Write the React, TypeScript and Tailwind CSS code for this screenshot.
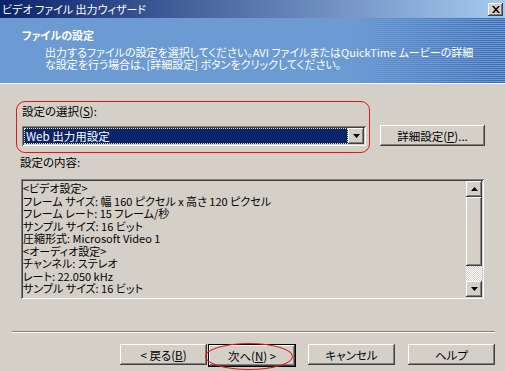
import React from "react";

const raised =
  "bg-[#d4d0c8] shadow-[inset_-1px_-1px_#404040,inset_1px_1px_#ffffff,inset_-2px_-2px_#808080,inset_2px_2px_#d4d0c8]";
const sunken =
  "shadow-[inset_1px_1px_#808080,inset_-1px_-1px_#ffffff,inset_2px_2px_#404040,inset_-2px_-2px_#d4d0c8]";

function Btn({ children, className = "" }: { children: React.ReactNode; className?: string }) {
  return (
    <div
      className={`${raised} h-[21px] flex items-center justify-center text-[11.5px] leading-[14px] text-black whitespace-nowrap ${className}`}
    >
      {children}
    </div>
  );
}

function Arrow({ up }: { up?: boolean }) {
  return (
    <svg width="7" height="4" viewBox="0 0 7 4" className={up ? "rotate-180" : ""}>
      <path d="M0 0h7L3.5 4z" fill="#000" />
    </svg>
  );
}

export default function App() {
  const lines = [
    "<ビデオ設定>",
    "フレーム サイズ: 幅 160 ピクセル x 高さ 120 ピクセル",
    "フレーム レート: 15 フレーム/秒",
    "サンプル サイズ: 16 ビット",
    "圧縮形式: Microsoft Video 1",
    "<オーディオ設定>",
    "チャンネル: ステレオ",
    "レート: 22.050 kHz",
    "サンプル サイズ: 16 ビット",
  ];
  return (
    <div className="relative w-[505px] h-[371px] overflow-hidden bg-[#d4d0c8] font-['Noto_Sans_CJK_JP','Noto_Sans',sans-serif] [font-feature-settings:'palt'] text-[11.5px] text-black">
      {/* Title bar */}
      <div className="h-[18px] flex items-center justify-between pl-[2px] pr-[2px] bg-[linear-gradient(to_right,#0a246a,#a6caf0)]">
        <span className="text-white text-[11px] leading-[13px] whitespace-nowrap">ビデオ ファイル 出力ウィザード</span>
        <div className={`${raised} w-[15px] h-[13px] flex items-center justify-center`}>
          <svg width="8" height="7" viewBox="0 0 8 7">
            <path d="M0 0h2l2 2.5L6 0h2L5 3.5 8 7H6L4 4.5 2 7H0l3-3.5z" fill="#000" />
          </svg>
        </div>
      </div>

      {/* Header */}
      <div className="h-[66px] border-b border-white pt-[10px] bg-[image:linear-gradient(to_right,#6c9ad2_70%,rgba(108,154,210,0)_100%),repeating-linear-gradient(to_bottom,#3c68b4_0px,#3c68b4_1px,#6c9ad2_1px,#6c9ad2_2px)]">
        <div className="pl-[22px] text-white font-bold text-[11px] leading-[14px] whitespace-nowrap">ファイルの設定</div>
        <div className="pl-[45px] mt-[4px] text-white text-[11px] leading-[12px] whitespace-nowrap">
          <div>出力するファイルの設定を選択してください。AVI ファイルまたはQuickTime ムービーの詳細</div>
          <div>な設定を行う場合は、[詳細設定] ボタンをクリックしてください。</div>
        </div>
      </div>

      {/* Body */}
      <div className="pl-[16px] pt-[17px]">
        <div className="flex items-start">
          <div className="w-[354px] h-[52px] border border-[#e8141c] rounded-[9px] pl-[5px] pt-[2px]">
            <div className="leading-[14px] whitespace-nowrap">
              設定の選択(<span className="underline">S</span>):
            </div>
            <div className={`${sunken} bg-white mt-[8px] w-[344px] h-[20px] p-[2px] flex`}>
              <div className="flex-1 bg-[#0a246a] border border-dotted border-[#f4e4a0] text-white leading-[14px] pl-[1px] whitespace-nowrap">
                Web 出力用設定
              </div>
              <div className={`${raised} w-[16px] flex items-center justify-center`}>
                <Arrow />
              </div>
            </div>
          </div>
          <Btn className="ml-[10px] mt-[24px] w-[105px]">
            詳細設定(<span className="underline">P</span>)...
          </Btn>
        </div>

        <div className="mt-[2px] pl-[4px] leading-[14px] whitespace-nowrap">設定の内容:</div>

        <div className={`${sunken} mt-[10px] ml-[5px] w-[463px] h-[120px] p-[2px] flex`}>
          <div className="flex-1 pt-[1px] text-[11px] leading-[12.5px] whitespace-pre">
            {lines.map((l, i) => (
              <div key={i}>{l}</div>
            ))}
          </div>
          <div className="w-[16px] flex flex-col">
            <div className={`${raised} h-[16px] flex items-center justify-center`}>
              <Arrow up />
            </div>
            <div className={`${raised} h-[69px]`} />
            <div className="h-[15px] bg-[repeating-conic-gradient(#d4d0c8_0_25%,#ffffff_0_50%)] bg-[length:2px_2px]" />
            <div className={`${raised} h-[16px] flex items-center justify-center`}>
              <Arrow />
            </div>
          </div>
        </div>
      </div>

      {/* Separator */}
      <div className="ml-[12px] mr-[10px] mt-[32px] border-t border-[#808080] border-b border-b-white h-[2px]" />

      {/* Buttons */}
      <div className="flex justify-end pr-[10px] mt-[11px]">
        <Btn className="w-[87px]">
          &lt; 戻る(<span className="underline">B</span>)
        </Btn>
        <div className="ml-[1px] border border-black">
          <Btn className="w-[86px] h-[19px]">
            次へ(<span className="underline">N</span>) &gt;
          </Btn>
        </div>
        <Btn className="ml-[12px] w-[87px]">キャンセル</Btn>
        <Btn className="ml-[13px] w-[87px]">ヘルプ</Btn>
      </div>

      {/* Annotation ellipse */}
      <div className="absolute left-[205px] top-[343px] w-[88px] h-[27px] rounded-[50%] border border-[#e8141c]" />
    </div>
  );
}
